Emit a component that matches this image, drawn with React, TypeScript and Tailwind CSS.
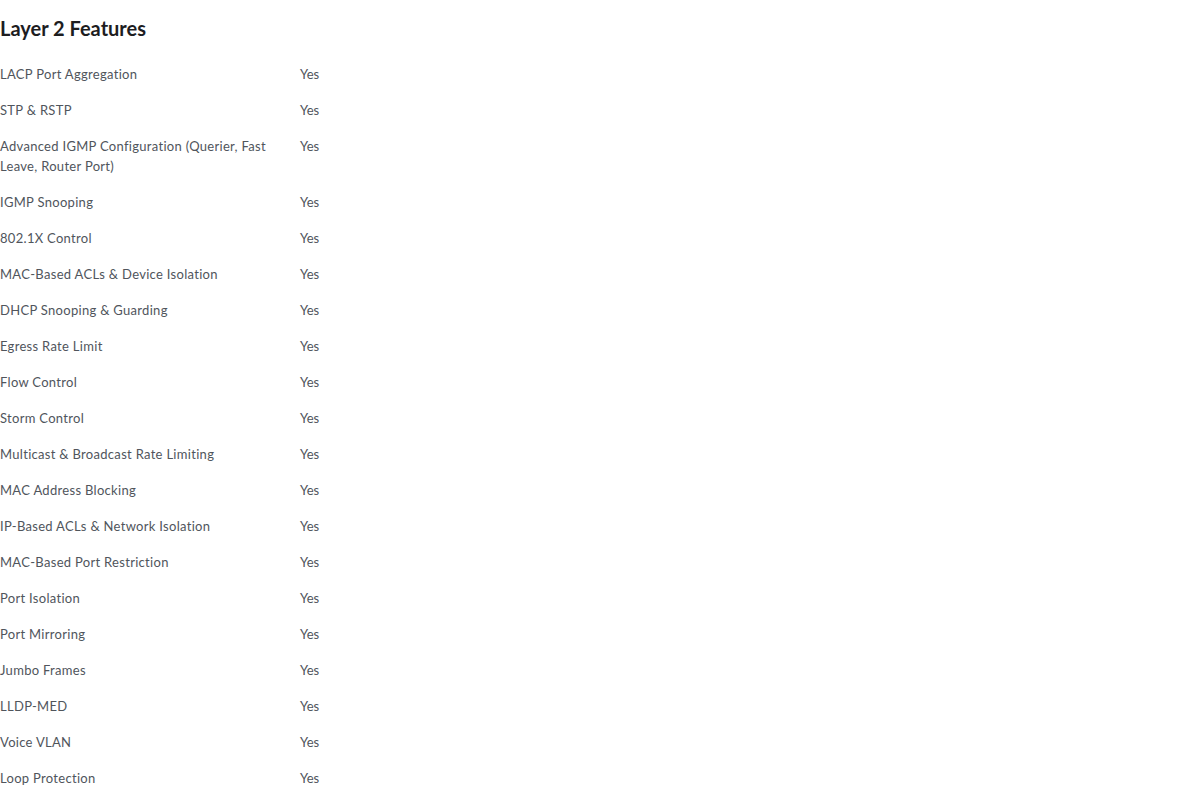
import React from 'react';

const features = [
  'LACP Port Aggregation',
  'STP & RSTP',
  'Advanced IGMP Configuration (Querier, Fast Leave, Router Port)',
  'IGMP Snooping',
  '802.1X Control',
  'MAC-Based ACLs & Device Isolation',
  'DHCP Snooping & Guarding',
  'Egress Rate Limit',
  'Flow Control',
  'Storm Control',
  'Multicast & Broadcast Rate Limiting',
  'MAC Address Blocking',
  'IP-Based ACLs & Network Isolation',
  'MAC-Based Port Restriction',
  'Port Isolation',
  'Port Mirroring',
  'Jumbo Frames',
  'LLDP-MED',
  'Voice VLAN',
  'Loop Protection',
];

export default function App() {
  return (
    <div className="bg-white min-h-screen font-['Lato',sans-serif]">
      <section className="pt-[15px]">
        {/* Section Header */}
        <h2 className="text-[20px] leading-[26px] font-bold text-[#1d1d1f] mb-[15px]">Layer 2 Features</h2>

        <div className="flex flex-col">
          {features.map((name) => (
            <div key={name} className="flex py-2 text-[13px] leading-5 tracking-[0.3px] text-[#50555c]">
              <div className="w-[300px] pr-[24px]">{name}</div>
              <div className="tracking-normal">Yes</div>
            </div>
          ))}
        </div>
      </section>
    </div>
  );
}
